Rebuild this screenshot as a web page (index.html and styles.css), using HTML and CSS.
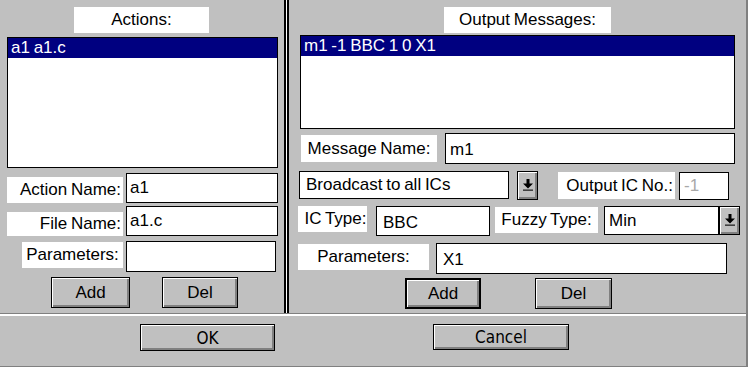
FILE: index.html
```html
<!DOCTYPE html>
<html lang="en">
<head>
    <meta charset="UTF-8" />
    <title>Actions and Output Messages</title>
    <link rel="stylesheet" href="styles.css">
</head>
<body>
    <div class="dialog">
        <div class="top">
            <section class="panel panel-left">
                <div class="caption caption-actions">Actions:</div>
                <div class="listbox list-actions">
                    <div class="item selected">a1 a1.c</div>
                </div>

                <div class="row row-action">
                    <span class="label label-action">Action Name:</span>
                    <span class="field field-action">a1</span>
                </div>
                <div class="row row-file">
                    <span class="label label-file">File Name:</span>
                    <span class="field field-file">a1.c</span>
                </div>
                <div class="row row-lparams">
                    <span class="label label-lparams">Parameters:</span>
                    <span class="field field-lparams"></span>
                </div>
                <div class="row row-lbuttons">
                    <button class="btn btn-ladd">Add</button>
                    <button class="btn btn-ldel">Del</button>
                </div>
            </section>

            <div class="divider"></div>

            <section class="panel panel-right">
                <div class="caption caption-output">Output Messages:</div>
                <div class="listbox list-output">
                    <div class="item selected">m1 -1 BBC 1 0 X1</div>
                </div>

                <div class="row row-message">
                    <span class="label label-message">Message Name:</span>
                    <span class="field field-message">m1</span>
                </div>
                <div class="row row-broadcast">
                    <span class="field select-broadcast">Broadcast to all ICs</span>
                    <span class="dd dd-broadcast">
                        <svg width="10" height="12" viewBox="0 0 10 12"><path d="M3.5 0h3v4.5H10L5 9.5 0 4.5h3.5z" fill="#000"/><rect x="0" y="10.5" width="10" height="1.3" fill="#222"/></svg>
                    </span>
                    <span class="label label-icno">Output IC No.:</span>
                    <span class="field field-icno">-1</span>
                </div>
                <div class="row row-ictype">
                    <span class="label label-ictype">IC Type:</span>
                    <span class="field field-ictype">BBC</span>
                    <span class="label label-fuzzy">Fuzzy Type:</span>
                    <span class="field select-fuzzy">Min</span>
                    <span class="dd dd-fuzzy">
                        <svg width="10" height="12" viewBox="0 0 10 12"><path d="M3.5 0h3v4.5H10L5 9.5 0 4.5h3.5z" fill="#000"/><rect x="0" y="10.5" width="10" height="1.3" fill="#222"/></svg>
                    </span>
                </div>
                <div class="row row-rparams">
                    <span class="label label-rparams">Parameters:</span>
                    <span class="field field-rparams">X1</span>
                </div>
                <div class="row row-rbuttons">
                    <button class="btn btn-default btn-radd">Add</button>
                    <button class="btn btn-rdel">Del</button>
                </div>
            </section>
        </div>

        <div class="bottom">
            <button class="btn btn-wide btn-ok">OK</button>
            <button class="btn btn-wide btn-cancel">Cancel</button>
        </div>
    </div>
</body>
</html>
```

FILE: styles.css
```css
body {
    margin: 0;
    font-family: "Liberation Sans", Arial, sans-serif;
    font-size: 17px;
    word-spacing: -1px;
    color: #000;
    background: #c0c0c0;
}
.dialog {
    width: 748px;
    height: 367px;
    box-sizing: border-box;
    display: flex;
    flex-direction: column;
    background: #c0c0c0;
    border-right: 2px solid #808080;
    border-bottom: 1px solid #808080;
}
.top {
    height: 313px;
    display: flex;
}
.panel {
    display: flex;
    flex-direction: column;
    align-items: flex-start;
    box-sizing: border-box;
    padding-top: 7px;
}
.panel-left {
    width: 284px;
    padding-left: 7px;
}
.panel-right {
    flex: 1;
    padding-left: 9px;
}
.divider {
    width: 1px;
    background: #fff;
    border-left: 2px solid #000;
    border-right: 2px solid #000;
}

/* captions, labels, fields */
.caption, .label {
    background: #fff;
    display: flex;
    align-items: center;
    justify-content: center;
    box-sizing: border-box;
    line-height: 20px;
    white-space: nowrap;
}
.caption {
    height: 26px;
}
.caption-actions {
    width: 135px;
    margin-left: 67px;
}
.caption-output {
    width: 167px;
    margin-left: 146px;
}
.listbox {
    background: #fff;
    border: 1px solid #000;
    box-sizing: border-box;
}
.list-actions {
    width: 271px;
    height: 131px;
    margin-top: 4px;
}
.list-output {
    width: 435px;
    height: 94px;
    margin-top: 2px;
    margin-left: 2px;
}
.item {
    height: 20px;
    line-height: 20px;
    padding-left: 3px;
    white-space: nowrap;
}
.item.selected {
    background: #000080;
    color: #fff;
}
.row {
    display: flex;
    align-items: flex-start;
}
.field {
    background: #fff;
    border: 1px solid #000;
    box-sizing: border-box;
    display: flex;
    align-items: center;
    padding-left: 3px;
    line-height: 20px;
    white-space: nowrap;
}

/* left panel rows */
.row-action {
    height: 30px;
    margin-top: 5px;
}
.row-file {
    height: 30px;
    margin-top: 3px;
}
.label-action, .label-file {
    width: 116px;
    justify-content: flex-end;
    padding-right: 2px;
    align-self: flex-end;
}
.label-action {
    height: 26px;
}
.label-file {
    height: 24px;
}
.field-action, .field-file {
    width: 152px;
    height: 30px;
    margin-left: 3px;
}
.row-lparams {
    height: 31px;
    margin-top: 5px;
}
.label-lparams {
    width: 101px;
    height: 26px;
    margin-left: 15px;
    margin-top: 1px;
}
.field-lparams {
    width: 150px;
    height: 31px;
    margin-left: 3px;
}
.row-lbuttons {
    margin-top: 5px;
}
.btn-ladd {
    width: 79px;
    margin-left: 44px;
}
.btn-ldel {
    width: 76px;
    margin-left: 32px;
}

/* right panel rows */
.row-message {
    height: 31px;
    margin-top: 4px;
}
.label-message {
    width: 136px;
    height: 27px;
    margin-left: 3px;
    margin-top: 2px;
}
.field-message {
    width: 290px;
    height: 31px;
    margin-left: 8px;
    padding-left: 4px;
    padding-top: 3px;
}
.row-broadcast {
    height: 29px;
    margin-top: 7px;
}
.select-broadcast {
    width: 210px;
    height: 28px;
    margin-left: 1px;
    padding-left: 6px;
}
.dd {
    width: 21px;
    height: 29px;
    box-sizing: border-box;
    background: #c0c0c0;
    border: 1px solid #000;
    box-shadow: inset 1px 1px #fff, inset -2px -2px #808080;
    display: flex;
    align-items: center;
    justify-content: center;
    padding-bottom: 1px;
}
.dd-broadcast {
    margin-left: 8px;
}
.label-icno {
    width: 117px;
    height: 27px;
    margin-left: 20px;
    margin-top: 1px;
    justify-content: flex-end;
    padding-right: 2px;
}
.field-icno {
    width: 50px;
    height: 28px;
    margin-left: 4px;
    margin-top: 1px;
    color: #a8a8a8;
    padding-left: 4px;
}
.row-ictype {
    height: 30px;
    margin-top: 6px;
}
.label-ictype {
    width: 69px;
    height: 26px;
    padding-left: 6px;
}
.field-ictype {
    width: 114px;
    height: 30px;
    margin-left: 9px;
    padding-left: 6px;
    padding-top: 3px;
}
.label-fuzzy {
    width: 103px;
    height: 26px;
    margin-left: 5px;
    margin-top: 1px;
}
.select-fuzzy {
    width: 115px;
    height: 29px;
    margin-left: 6px;
    padding-left: 4px;
}
.dd-fuzzy {
    margin-left: 0;
}
.row-rparams {
    height: 31px;
    margin-top: 7px;
}
.label-rparams {
    width: 131px;
    height: 26px;
    margin-top: 1px;
}
.field-rparams {
    width: 291px;
    height: 31px;
    margin-left: 7px;
    padding-left: 6px;
    padding-top: 3px;
}
.row-rbuttons {
    margin-top: 4px;
}
.btn-radd {
    width: 76px;
    margin-left: 107px;
}
.btn-rdel {
    width: 77px;
    margin-left: 54px;
}

/* buttons */
.btn {
    height: 31px;
    box-sizing: border-box;
    background: #c0c0c0;
    border: 1px solid #000;
    box-shadow: inset 1px 1px #fff, inset -2px -2px #808080;
    font-family: "Liberation Sans", Arial, sans-serif;
    font-size: 17px;
    color: #000;
    padding: 0;
    line-height: 20px;
}
.btn-default {
    border-width: 2px;
}
.bottom {
    flex: 1;
    display: flex;
    align-items: flex-start;
    border-top: 1px solid #808080;
    box-shadow: inset 0 2px 0 #fff;
    padding-top: 10px;
}
.btn-wide {
    height: 27px;
    font-family: "DejaVu Sans Condensed", "DejaVu Sans", sans-serif;
    font-size: 17px;
}
.btn-ok {
    width: 135px;
    margin-left: 140px;
}
.btn-cancel {
    width: 136px;
    height: 26px;
    margin-left: 158px;
}
```
